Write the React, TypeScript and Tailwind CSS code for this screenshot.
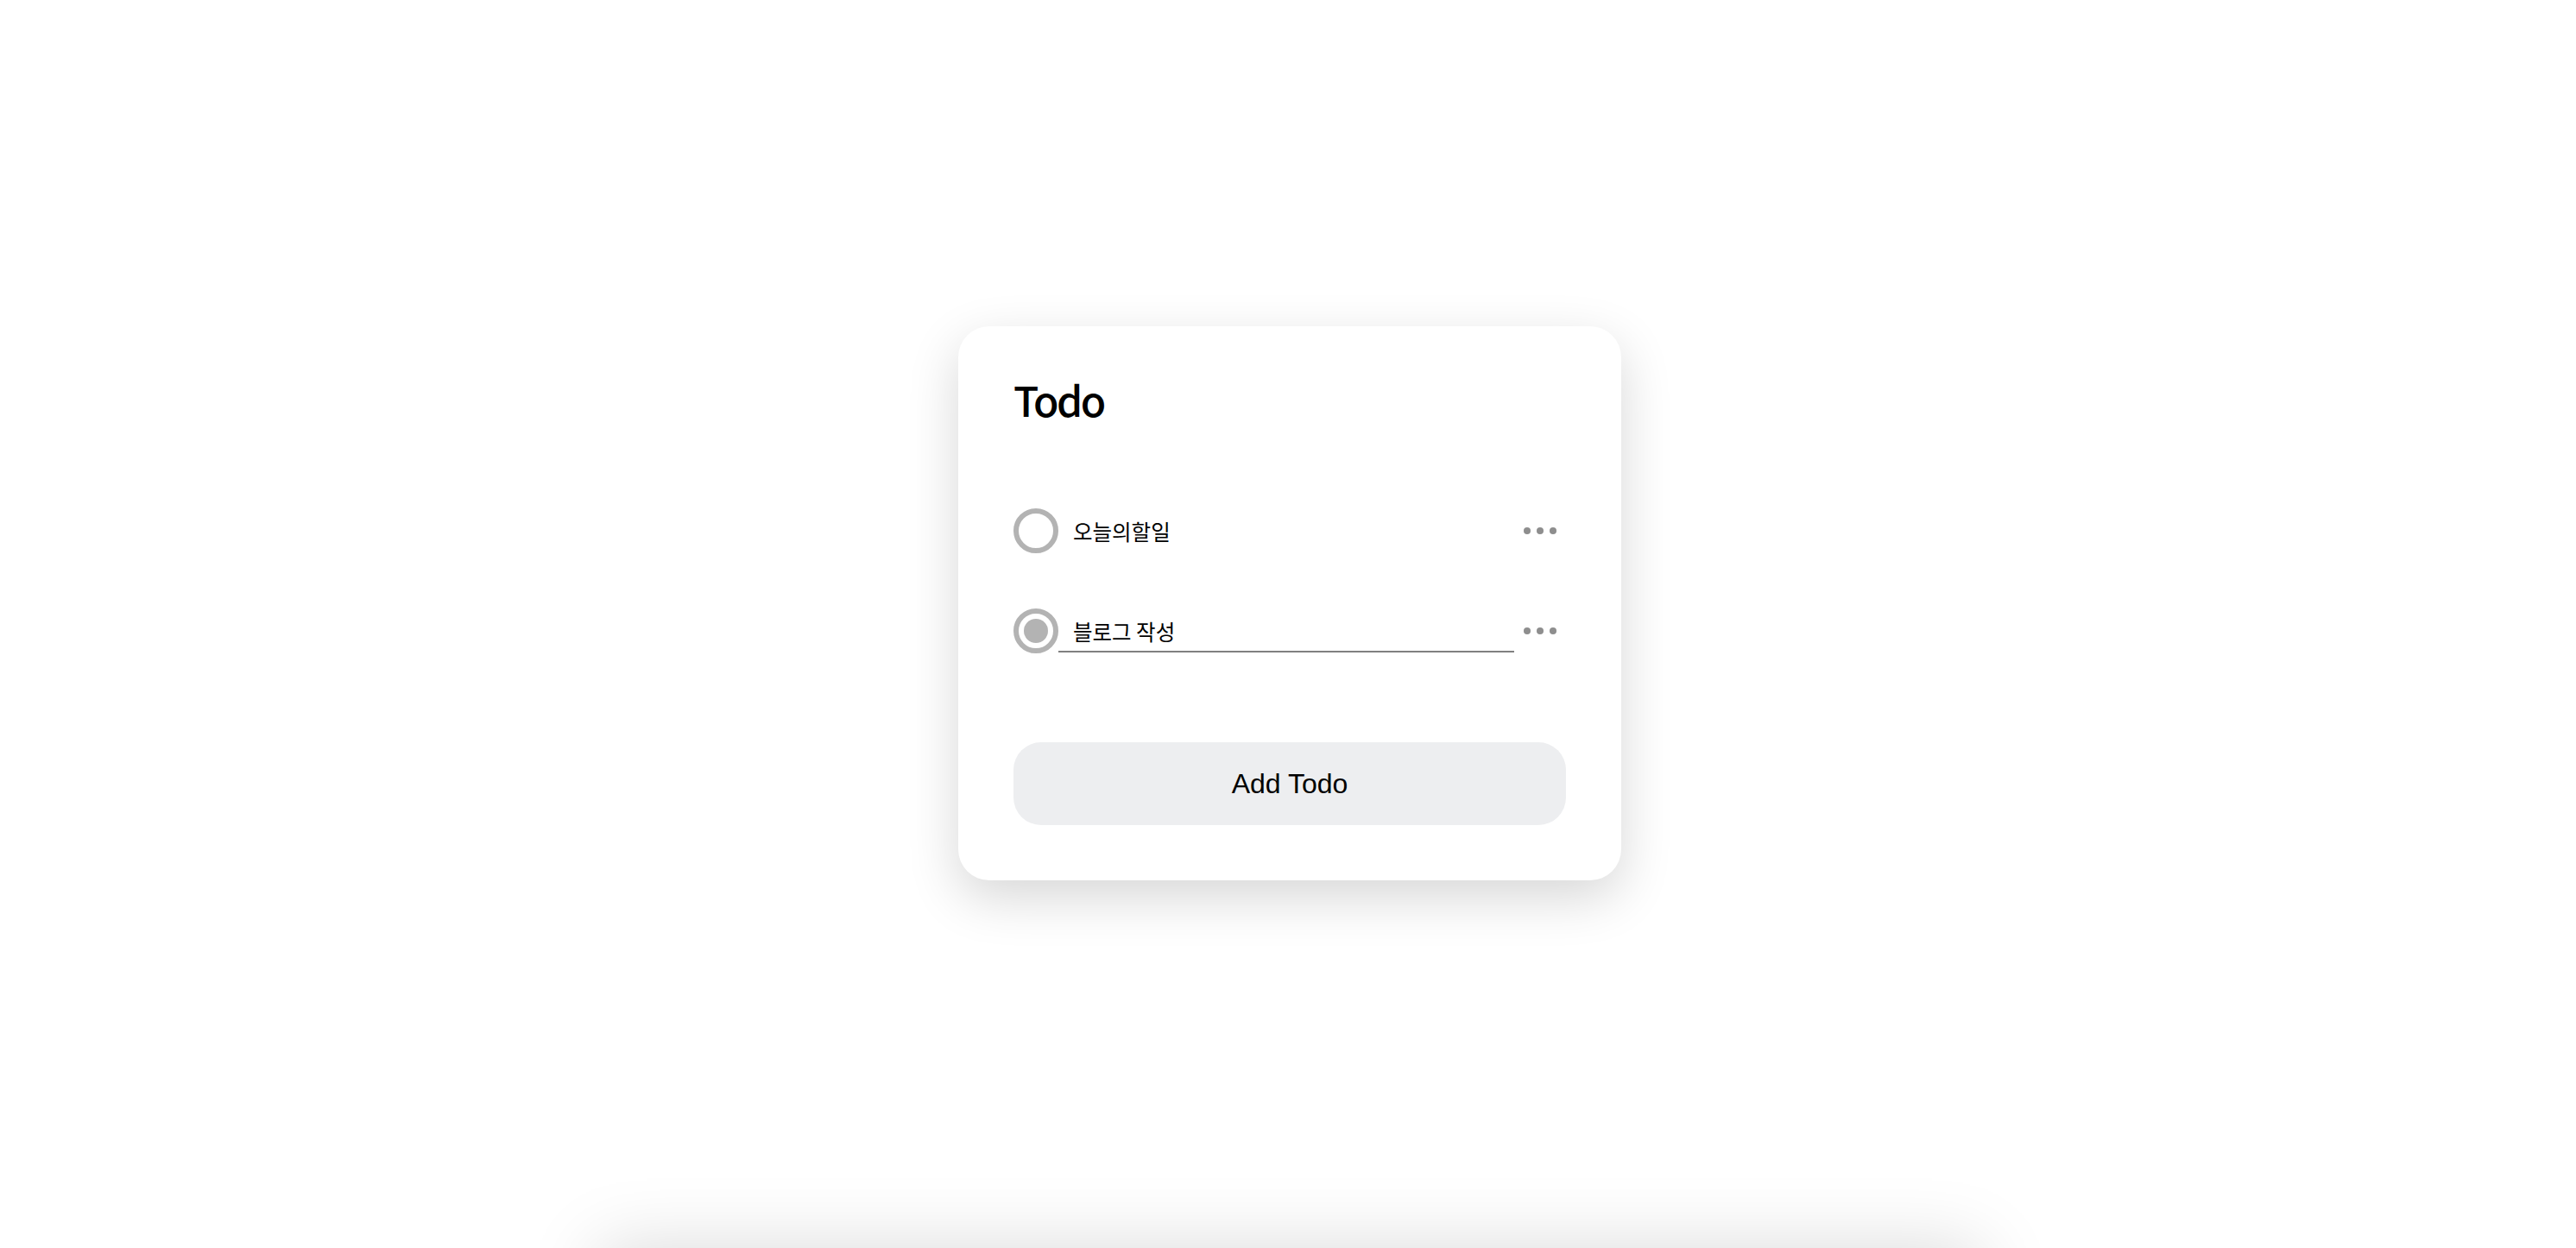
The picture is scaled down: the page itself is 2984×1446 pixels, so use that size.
import { useState } from "react";

type Todo = { id: number; text: string; done: boolean };

const initialTodos: Todo[] = [
	{ id: 1, text: "오늘의할일", done: false },
	{ id: 2, text: "블로그 작성", done: true },
];

function MoreDots() {
	return (
		<button className="flex h-full w-[60px] items-center justify-center gap-[7px]">
			<span className="h-[8px] w-[8px] rounded-full bg-[#8e8e8e]" />
			<span className="h-[8px] w-[8px] rounded-full bg-[#8e8e8e]" />
			<span className="h-[8px] w-[8px] rounded-full bg-[#8e8e8e]" />
		</button>
	);
}

function TodoRow({ todo, editing }: { todo: Todo; editing: boolean }) {
	return (
		<li className="flex h-[52px] items-center">
			<span className="flex h-[52px] w-[52px] shrink-0 items-center justify-center rounded-full border-[6px] border-[#b3b3b3]">
				{todo.done && <span className="h-[28px] w-[28px] rounded-full bg-[#b3b3b3]" />}
			</span>
			{editing ? (
				<input
					defaultValue={todo.text}
					className="h-[50px] flex-1 border-b-2 border-[#808080] bg-transparent pt-[2px] pl-[17px] text-[24.5px] text-black outline-none"
				/>
			) : (
				<span className="flex h-[50px] flex-1 items-center pt-[3px] pl-[17px] text-[24.5px] text-black">{todo.text}</span>
			)}
			<MoreDots />
		</li>
	);
}

export default function App() {
	const [todos] = useState(initialTodos);

	return (
		<div
			className="h-[1446px] overflow-hidden bg-white pl-[4px]"
			style={{ fontFamily: '"Noto Sans CJK KR", "Noto Sans", sans-serif' }}
		>
			<div className="mx-auto mt-[378px] w-[768px] rounded-[36px] bg-white px-[64px] pt-[60px] pb-[64px] shadow-[0_20px_60px_rgba(0,0,0,0.16)]">
				<h1 className="text-[48px] leading-[48px] font-medium tracking-[-2.5px] text-black">Todo</h1>
				<ul className="mt-[103px] flex flex-col gap-[64px]">
					{todos.map((todo) => (
						<TodoRow key={todo.id} todo={todo} editing={todo.done} />
					))}
				</ul>
				<button
					className="mt-[103px] flex h-[96px] w-full items-center justify-center rounded-[32px] bg-[#edeef0] text-[32px] text-black"
					style={{ fontFamily: '"Liberation Sans", Arial, sans-serif' }}
				>
					Add Todo
				</button>
			</div>
			{/* next section, just below the fold */}
			<section className="mx-auto mt-[426px] h-[600px] w-[1600px] bg-white shadow-[0_0_80px_rgba(0,0,0,0.15)]" />
		</div>
	);
}
